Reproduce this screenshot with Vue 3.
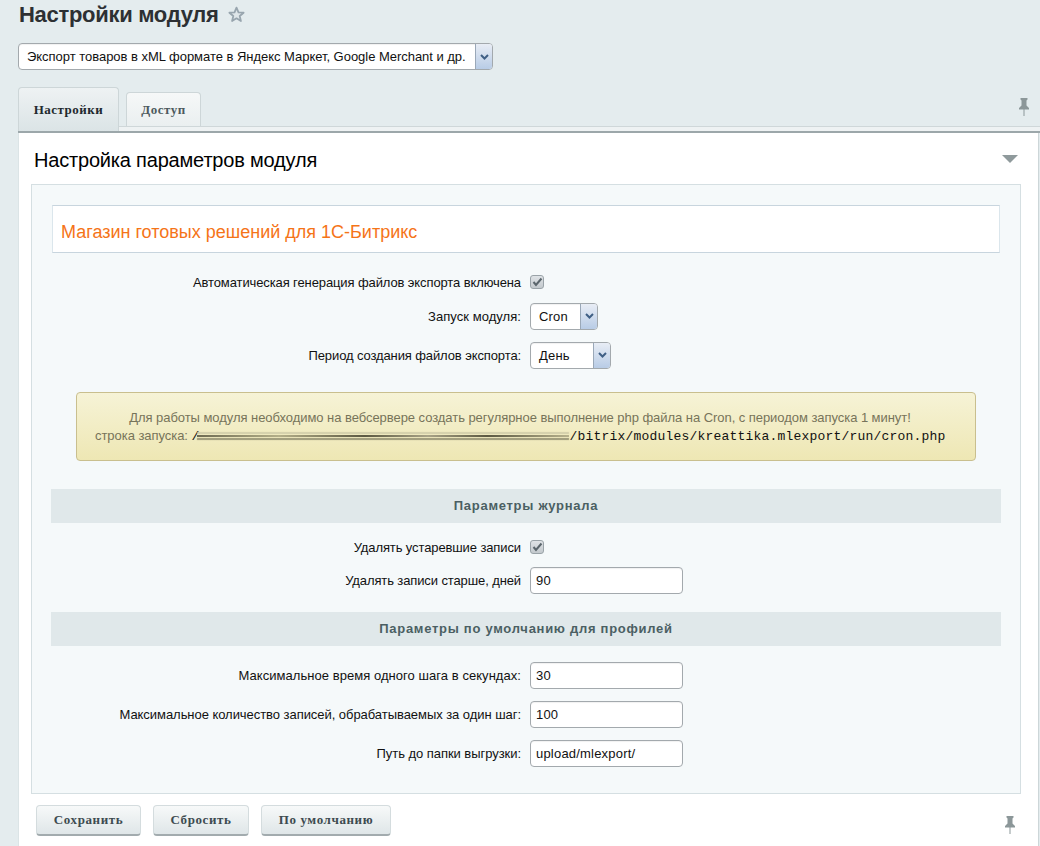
<template>
  <div class="page">
    <div class="title-row">
      <h1 class="title">Настройки модуля</h1>
      <svg class="star" width="17" height="17" viewBox="0 0 17 17"><path d="M8.500 1.600 10.500 6.300 15.600 6.700 11.700 10 12.900 15 8.500 12.300 4.100 15 5.300 10 1.400 6.700 6.500 6.300Z" fill="#dfe6e9" stroke="#98a5ae" stroke-width="1.800" stroke-linejoin="round"/></svg>
    </div>
    <div class="select wide">
      <span class="select-text tight-select">Экспорт товаров в xML формате в Яндекс Маркет, Google Merchant и др.</span>
      <span class="select-btn"><svg width="9" height="6" viewBox="0 0 9 6"><path d="M1 1 4.500 4.500 8 1" fill="none" stroke="#3f5f85" stroke-width="2"/></svg></span>
    </div>
    <div class="tabs">
      <div class="tab active">Настройки</div>
      <div class="tab">Доступ</div>
      <svg class="pin pin-top" width="12" height="18" viewBox="0 0 12 18"><path d="M2.500 0h7v1.500L8.500 2.500v5l2.500 2.500v1.500H1V10l2.500-2.500v-5L2.500 1.500Z" fill="#8c9799"/><rect x="5.500" y="11" width="1" height="7" fill="#8c9799"/></svg>
    </div>
    <div class="band"></div>
    <div class="main">
      <div class="main-head">
        <h2 class="main-title">Настройка параметров модуля</h2>
        <span class="collapse"></span>
      </div>
      <div class="panel">
        <div class="banner">Магазин готовых решений для 1С-Битрикс</div>

        <div class="row h34">
          <label class="label tight">Автоматическая генерация файлов экспорта включена</label>
          <span class="check"><svg width="11" height="10" viewBox="0 0 11 10"><path d="M1.500 5 4 8 9.500 1.500" fill="none" stroke="#5b666c" stroke-width="2"/></svg></span>
        </div>
        <div class="row h34">
          <label class="label wider">Запуск модуля:</label>
          <div class="select cron">
            <span class="select-text">Cron</span>
            <span class="select-btn"><svg width="9" height="6" viewBox="0 0 9 6"><path d="M1 1 4.500 4.500 8 1" fill="none" stroke="#3f5f85" stroke-width="2"/></svg></span>
          </div>
        </div>
        <div class="row h44">
          <label class="label tight">Период создания файлов экспорта:</label>
          <div class="select day">
            <span class="select-text">День</span>
            <span class="select-btn"><svg width="9" height="6" viewBox="0 0 9 6"><path d="M1 1 4.500 4.500 8 1" fill="none" stroke="#3f5f85" stroke-width="2"/></svg></span>
          </div>
        </div>

        <div class="notice">
          <p class="notice-line center">Для работы модуля необходимо на вебсервере создать регулярное выполнение php файла на Cron, с периодом запуска 1 минут!</p>
          <p class="notice-line">строка запуска: <span class="path"><span class="smear"></span>/<span class="path-gap"></span>/bitrix/modules/kreattika.mlexport/run/cron.php</span></p>
        </div>

        <div class="section first">Параметры журнала</div>
        <div class="row h32">
          <label class="label tight">Удалять устаревшие записи</label>
          <span class="check"><svg width="11" height="10" viewBox="0 0 11 10"><path d="M1.500 5 4 8 9.500 1.500" fill="none" stroke="#5b666c" stroke-width="2"/></svg></span>
        </div>
        <div class="row h34">
          <label class="label tight">Удалять записи старше, дней</label>
          <input class="input" value="90" />
        </div>

        <div class="section second">Параметры по умолчанию для профилей</div>
        <div class="row h39">
          <label class="label wider">Максимальное время одного шага в секундах:</label>
          <input class="input" value="30" />
        </div>
        <div class="row h39">
          <label class="label">Максимальное количество записей, обрабатываемых за один шаг:</label>
          <input class="input" value="100" />
        </div>
        <div class="row h39">
          <label class="label">Путь до папки выгрузки:</label>
          <input class="input" value="upload/mlexport/" />
        </div>
      </div>
      <div class="actions">
        <button class="btn b1">Сохранить</button>
        <button class="btn b2">Сбросить</button>
        <button class="btn b3">По умолчанию</button>
        <svg class="pin pin-bottom" width="12" height="18" viewBox="0 0 12 18"><path d="M2.500 0h7v1.500L8.500 2.500v5l2.500 2.500v1.500H1V10l2.500-2.500v-5L2.500 1.500Z" fill="#8c9799"/><rect x="5.500" y="11" width="1" height="7" fill="#8c9799"/></svg>
      </div>
    </div>
  </div>
</template>

<script setup>
</script>

<style>
html, body { margin: 0; background: #e4ecee; }
</style>

<style scoped>
.page {
  position: relative;
  width: 1040px;
  height: 846px;
  overflow: hidden;
  background: #e4ecee;
  font-family: "Liberation Sans", Arial, sans-serif;
  font-size: 13px;
  color: #000;
}
.title-row { height: 43px; display: flex; align-items: flex-start; padding-left: 19px; box-sizing: border-box; }
.title { margin: 0; font-size: 22px; line-height: 30px; font-weight: bold; color: #2d3033; letter-spacing: -.3px; }
.star { margin: 6px 0 0 9px; }
.select {
  display: flex;
  box-sizing: border-box;
  height: 27px;
  border: 1px solid #a3a9ad;
  border-radius: 4px;
  background: #fff;
  overflow: hidden;
  box-shadow: inset 0 1px 1px rgba(0,0,0,.06);
}
.select.wide { margin-left: 18px; width: 475px; }
.select.cron { width: 68px; }
.select.day { width: 81px; }
.select-text { flex: 1; padding-left: 8px; line-height: 25px; white-space: nowrap; letter-spacing: .2px; color: #111; }
.select-text.tight-select { letter-spacing: -.03px; }
.select-btn {
  width: 16px;
  flex: none;
  display: flex;
  align-items: center;
  justify-content: center;
  border-left: 1px solid #9aa8b8;
  background: linear-gradient(#e8edf5, #b8cce6);
}
.tabs { position: relative; margin: 17px 0 0 18px; height: 39px; display: flex; align-items: flex-end; gap: 7px; }
.tab {
  box-sizing: border-box;
  height: 34px;
  width: 75px;
  border: 1px solid #cdd6d8;
  border-bottom: none;
  border-radius: 4px 4px 0 0;
  background: linear-gradient(#f6f8f8, #eaeff0);
  text-align: center;
  line-height: 33px;
  font-family: "Liberation Serif", serif;
  font-weight: bold;
  font-size: 13px;
  letter-spacing: .5px;
  color: #4d5a5e;
}
.tab.active {
  position: relative;
  z-index: 1;
  width: 101px;
  height: 44px;
  margin-bottom: -5px;
  line-height: 43px;
  color: #1f2a2e;
  background: linear-gradient(#eef2f3, #dbe4e6);
}
.pin { position: absolute; }
.pin-top { left: 1000px; top: 11px; }
.band { margin-left: 18px; height: 7px; box-sizing: border-box; background: #eef2f3; border-top: 1px solid #cfd7d9; border-bottom: 2px solid #9ca7aa; }
.main { margin-left: 18px; width: 1021px; height: 713px; box-sizing: border-box; background: #fff; border-right: 1px solid #cdd6d8; border-left: 1px solid #dbe4e6; }
.main-head { position: relative; height: 51px; padding-left: 15px; box-sizing: border-box; }
.main-title { margin: 0; padding-top: 14px; font-size: 20px; line-height: 26px; font-weight: normal; color: #000; letter-spacing: -.19px; }
.collapse {
  position: absolute;
  left: 983px;
  top: 22px;
  width: 0;
  height: 0;
  border-left: 8px solid transparent;
  border-right: 8px solid transparent;
  border-top: 8px solid #8f9a9c;
}
.panel {
  margin-left: 12px;
  width: 990px;
  height: 610px;
  box-sizing: border-box;
  padding: 20px 19px 0;
  background: #f5f9fa;
  border: 1px solid #d5dfe2;
}
.banner {
  margin: 0 1px 12px;
  height: 48px;
  box-sizing: border-box;
  padding-left: 8px;
  line-height: 52px;
  background: #fff;
  border: 1px solid #c8d5de;
  border-left-color: #dbe6ec;
  border-right-color: #dbe6ec;
  color: #f57418;
  font-size: 18px;
  font-weight: normal;
  white-space: nowrap;
}
.row { display: grid; grid-template-columns: 470px 1fr; column-gap: 9px; align-items: center; }
.h32 { height: 32px; }
.h34 { height: 34px; }
.h39 { height: 39px; }
.h44 { height: 44px; }
.label { text-align: right; letter-spacing: -.05px; color: #111; white-space: nowrap; }
.label.tight { letter-spacing: -.11px; }
.label.wider { letter-spacing: .05px; }
.check {
  width: 14px;
  height: 14px;
  box-sizing: border-box;
  border: 1px solid #9aa3a8;
  border-radius: 3px;
  background: linear-gradient(#dfe3e6, #c3c9cd);
  display: flex;
  align-items: center;
  justify-content: center;
}
.notice {
  margin: 15px 25px 28px;
  height: 69px;
  box-sizing: border-box;
  padding: 16px 18px 0;
  border: 1px solid #c9bf8e;
  border-radius: 4px;
  background: linear-gradient(#f6f3d6, #eee7b4);
  color: #77745a;
  letter-spacing: -.05px;
  font-size: 13px;
}
.notice-line { margin: 0; line-height: 18px; white-space: nowrap; }
.center { text-align: center; padding-right: 12px; }
.path { position: relative; font-family: "Liberation Mono", monospace; font-size: 13px; letter-spacing: .2px; color: #111; }
.path-gap { display: inline-block; width: 370px; }
.smear {
  position: absolute;
  left: 6px;
  top: 6px;
  width: 372px;
  height: 2px;
  background: linear-gradient(90deg, #6e6b52, #b3ae88 22%, #5c5942 45%, #a8a386 62%, #5c5942 78%, #b6b18c);
  box-shadow: 0 -3px 1px rgba(205,200,165,.8), 0 3px 1px rgba(125,121,95,.75);
  filter: blur(.6px);
}
.section {
  height: 34px;
  line-height: 34px;
  background: #e0e8ea;
  text-align: center;
  font-weight: bold;
  color: #4b5f63;
  letter-spacing: .72px;
}
.section.first { margin-bottom: 8px; }
.section.second { margin-top: 15px; margin-bottom: 10px; }
.input {
  width: 153px;
  height: 27px;
  box-sizing: border-box;
  padding: 0 5px;
  border: 1px solid #a3a9ad;
  border-radius: 4px;
  background: #fff;
  box-shadow: inset 0 1px 1px rgba(0,0,0,.06);
  font-family: "Liberation Sans", Arial, sans-serif;
  font-size: 13px;
  letter-spacing: .2px;
  color: #111;
  outline: none;
}
.actions { position: relative; display: flex; gap: 12px; padding: 11px 0 0 17px; }
.btn {
  height: 31px;
  padding: 0;
  border: 1px solid #d4dcde;
  border-bottom: 2px solid #a2abae;
  border-radius: 4px;
  background: linear-gradient(#f7f9f9, #dfe6e8);
  font-family: "Liberation Serif", serif;
  font-weight: bold;
  font-size: 13px;
  letter-spacing: .6px;
  color: #3d4b50;
}
.b1 { width: 105px; }
.b2 { width: 96px; }
.b3 { width: 130px; }
.pin-bottom { left: 985px; top: 22px; }
</style>
